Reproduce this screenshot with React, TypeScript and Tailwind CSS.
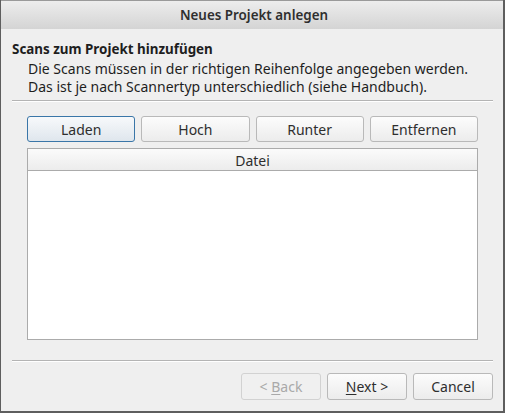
import React from "react";

const btn =
  "h-[26px] rounded-[3px] border border-[#b9b9b9] bg-gradient-to-b from-[#fcfcfc] to-[#ececec] text-[14px] text-[#2e2e2e] flex items-center justify-center";

export default function App() {
  return (
    <div
      className="w-[505px] h-[413px] bg-[#efefef] border-l border-r-2 border-b-2 border-[#5e5e5e] flex flex-col"
      style={{ fontFamily: '"Noto Sans", "DejaVu Sans", sans-serif' }}
    >
      {/* Title bar */}
      <div className="h-[29px] shrink-0 border-t border-[#9a9a9a] bg-gradient-to-b from-[#ededed] to-[#d4d4d4] flex items-center justify-center pl-[4px] text-[13.4px] font-semibold text-[#2f2f2f]">
        Neues Projekt anlegen
      </div>

      {/* Page header */}
      <div className="pl-[11px] pr-[10px] pt-[11px]">
        <div className="text-[13.4px] font-bold leading-[18px] text-[#1e1e1e]">Scans zum Projekt hinzufügen</div>
        <div className="pl-[16px] pt-[2px] text-[14px] leading-[18px] text-[#1e1e1e]">
          <div>Die Scans müssen in der richtigen Reihenfolge angegeben werden.</div>
          <div>Das ist je nach Scannertyp unterschiedlich (siehe Handbuch).</div>
        </div>
        <div className="mt-[4px] h-[2px] border-t border-[#b4b4b4] border-b border-b-white" />
      </div>

      {/* Buttons + list */}
      <div className="pl-[26px] pt-[14px]">
        <div className="w-[451px] grid grid-cols-4 gap-[6px]">
          <button className="h-[26px] rounded-[3px] border border-[#3a76a8] bg-gradient-to-b from-[#f7f9fb] to-[#dfe6ed] text-[14px] text-[#2e2e2e] flex items-center justify-center">
            Laden
          </button>
          <button className={btn}>Hoch</button>
          <button className={btn}>Runter</button>
          <button className={btn}>Entfernen</button>
        </div>
        <div className="mt-[6px] w-[451px] h-[192px] border border-[#ababab] bg-white flex flex-col">
          <div className="h-[22px] border-b border-[#ababab] bg-gradient-to-b from-[#fbfbfb] to-[#ececec] flex items-center justify-center pt-[1px] text-[14px] text-[#2e2e2e]">
            Datei
          </div>
        </div>
      </div>

      {/* Footer */}
      <div className="pl-[11px] pr-[10px] pt-[20px]">
        <div className="h-[2px] border-t border-[#b4b4b4] border-b border-b-white" />
        <div className="pt-[11px] flex justify-end gap-[6px]">
          <button className="w-[80px] h-[27px] rounded-[3px] border border-[#d2d2d2] bg-[#f0f0f0] text-[14px] text-[#a9a9a9] flex items-center justify-center">
            &lt;&nbsp;<span className="underline underline-offset-2">B</span>ack
          </button>
          <button className="w-[80px] h-[27px] rounded-[3px] border border-[#b9b9b9] bg-gradient-to-b from-[#fcfcfc] to-[#ececec] text-[14px] text-[#2e2e2e] flex items-center justify-center">
            <span className="underline underline-offset-2">N</span>ext&nbsp;&gt;
          </button>
          <button className="w-[80px] h-[27px] rounded-[3px] border border-[#b9b9b9] bg-gradient-to-b from-[#fcfcfc] to-[#ececec] text-[14px] text-[#2e2e2e] flex items-center justify-center">
            Cancel
          </button>
        </div>
      </div>
    </div>
  );
}
